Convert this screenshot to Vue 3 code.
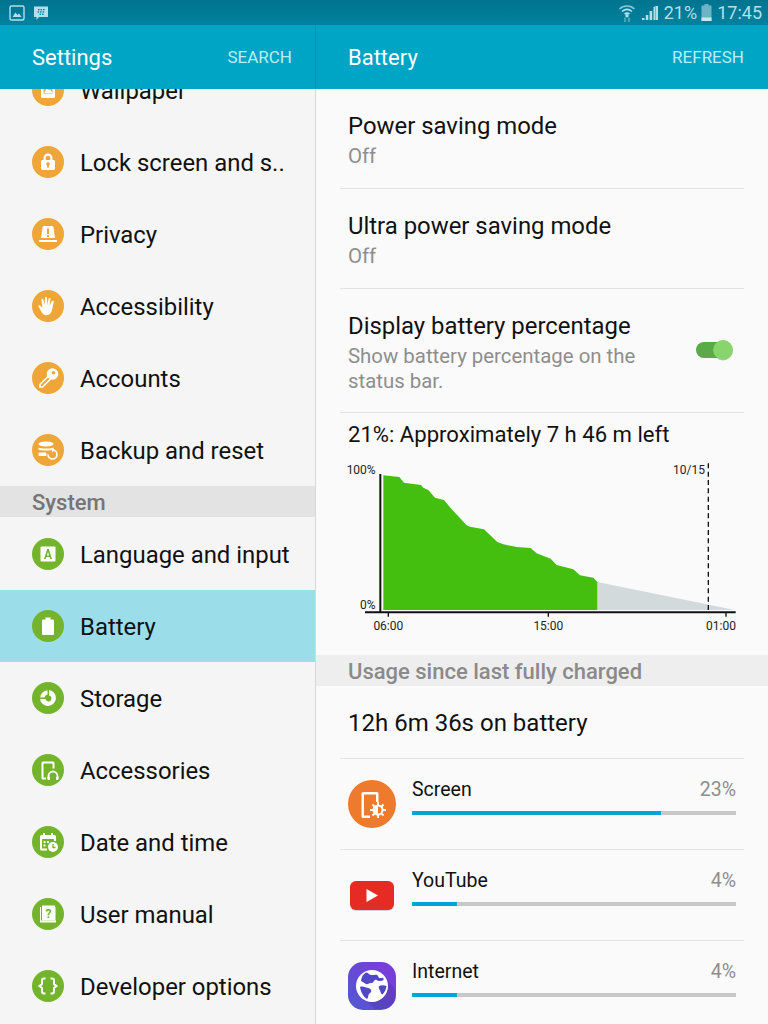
<script setup>
const orange = "#eea638";
const green = "#74b42c";

// Left pane, already scrolled so Wallpaper is half hidden
const personal = [
  { name: "Wallpaper", icon: "wallpaper" },
  { name: "Lock screen and s..", icon: "lock" },
  { name: "Privacy", icon: "privacy" },
  { name: "Accessibility", icon: "hand" },
  { name: "Accounts", icon: "key" },
  { name: "Backup and reset", icon: "backup" },
];
const system = [
  { name: "Language and input", icon: "lang" },
  { name: "Battery", icon: "battery", active: true },
  { name: "Storage", icon: "storage" },
  { name: "Accessories", icon: "accessories" },
  { name: "Date and time", icon: "date" },
  { name: "User manual", icon: "manual" },
  { name: "Developer options", icon: "dev" },
];

const settings = [
  { title: "Power saving mode", sub: "Off" },
  { title: "Ultra power saving mode", sub: "Off" },
];

const usage = [
  { name: "Screen", pct: "23%", fill: 77, icon: "screen" },
  { name: "YouTube", pct: "4%", fill: 14, icon: "youtube" },
  { name: "Internet", pct: "4%", fill: 14, icon: "internet" },
];

const curve =
  "130,76 178,81 192,98 243,105 250,113 265,120 285,143 312,150 330,172 380,226 390,230 432,238 472,276 490,283 530,291 572,294 590,310 632,326 650,345 700,358 720,376 760,383 772,396 772,480 130,480";
</script>

<template>
  <div class="screen">
    <!-- Status bar -->
    <div class="status">
      <div class="status-left">
        <svg width="16" height="16" viewBox="0 0 16 16">
          <rect x="1" y="1" width="14" height="14" rx="1.5" fill="none" stroke="#b4dfe9" stroke-width="1.4" />
          <path d="M3.5 12 6.5 7.5 8.500 10 10 8.500 12.500 12Z" fill="#b4dfe9" />
        </svg>
        <svg width="16" height="16" viewBox="0 0 16 16">
          <path d="M1 1.500H15V12H6L3.500 15V12H1Z" fill="#b4dfe9" />
          <g fill="#007f9e">
            <rect x="5" y="4" width="1.600" height="1.300" /><rect x="7.500" y="4" width="1.600" height="1.300" /><rect x="10" y="4" width="1.600" height="1.300" />
            <rect x="4.500" y="6.300" width="1.600" height="1.300" /><rect x="7" y="6.300" width="1.600" height="1.300" /><rect x="9.500" y="6.300" width="1.600" height="1.300" />
            <rect x="6.500" y="8.600" width="1.600" height="1.300" /><rect x="9" y="8.600" width="1.600" height="1.300" />
          </g>
        </svg>
      </div>
      <div class="status-right">
        <svg width="18" height="20" viewBox="0 0 18 20" fill="none" stroke="#b4dfe9" stroke-width="1.600">
          <path d="M1.500 6C5.500 2 12.500 2 16.500 6" opacity=".75" />
          <path d="M4 8.500C7 6 11 6 14 8.500" />
          <path d="M6.500 11C8 10 10 10 11.500 11" />
          <circle cx="9" cy="12.800" r=".9" fill="#b4dfe9" />
          <path d="M7 14.500V19M11 14.500V19" stroke-width="1.400" opacity=".55" />
        </svg>
        <svg class="signal" width="16" height="16" viewBox="0 0 16 16" fill="#b4dfe9">
          <path d="M0 13H2.500V15H0ZM3.800 10H6.300V15H3.800ZM7.600 6H10.200V15H7.600ZM11.500 2 13 1.500V15H11.500ZM13.400 1H16V15H13.400Z" />
        </svg>
        <span class="pct">21%</span>
        <svg width="11" height="17" viewBox="0 0 11 17">
          <path d="M3.500 0H7.500V1.500H10.500V17H.5V1.500H3.500Z" fill="#6cb5c7" />
          <rect x=".5" y="13.500" width="10" height="3.500" fill="#c6e8f0" />
        </svg>
        <span class="time">17:45</span>
      </div>
    </div>

    <div class="panes">
      <!-- Settings list -->
      <section class="left">
        <header class="bar">
          <span class="bar-title">Settings</span>
          <span class="bar-action">SEARCH</span>
        </header>
        <div class="scroller">
          <div class="list">
            <div v-for="item in personal" :key="item.name" class="row">
              <span class="dot" :style="{ background: orange }">
                <svg width="32" height="32" viewBox="0 0 32 32" fill="#fff">
                  <template v-if="item.icon === 'wallpaper'">
                    <rect x="9" y="8" width="14" height="16" rx="1" />
                    <rect x="11.500" y="10.500" width="9" height="9" :fill="orange" />
                    <path d="M12 19 15 14l2 2.500 1-1 2.500 3.500Z" />
                  </template>
                  <template v-if="item.icon === 'lock'">
                    <path d="M11.500 15V12a4.500 4.500 0 0 1 9 0v3h-2.200v-3a2.300 2.300 0 0 0-4.600 0v3Z" />
                    <rect x="9" y="14" width="14" height="10" rx="1.500" />
                    <circle cx="16" cy="18" r="1.800" :fill="orange" />
                    <rect x="15.100" y="18.500" width="1.800" height="3.200" :fill="orange" />
                  </template>
                  <template v-if="item.icon === 'privacy'">
                    <path d="M10.500 9.500a1.500 1.500 0 0 1 1.500-1.500h8a1.500 1.500 0 0 1 1.500 1.500L23 20H9Z" />
                    <rect x="7" y="22" width="18" height="2" />
                    <rect x="15" y="10.500" width="2" height="5.500" :fill="orange" />
                    <rect x="15" y="17" width="2" height="2" :fill="orange" />
                  </template>
                  <template v-if="item.icon === 'hand'">
                    <path d="M12.500 25c-2-1-3-3-4-5l-2-3.500c-.5-1 .8-1.800 1.600-1l2.400 2.600L9.500 10c-.2-1.300 1.600-1.600 1.900-.3l1.300 5.300.3-7c0-1.400 2-1.400 2 0l.3 7 1.300-6.200c.3-1.300 2.100-1 1.900.3l-1 6.700 2.400-4.500c.7-1.100 2.300-.3 1.800.9L20 20c-.8 3-2.500 6-7.500 5Z" />
                  </template>
                  <template v-if="item.icon === 'key'">
                    <path d="M8 22.500 16.500 14l2.500 2.500-8.500 8.500H8Z" fill="none" stroke="#fff" stroke-width="1.700" stroke-linejoin="round" />
                    <circle cx="20.500" cy="12" r="5.800" />
                    <circle cx="21.500" cy="10.800" r="1.800" :fill="orange" />
                  </template>
                  <template v-if="item.icon === 'backup'">
                    <ellipse cx="14" cy="10" rx="7.500" ry="2.500" />
                    <path d="M6.500 13.500c2 1.300 13 1.300 15 0v2c-2 1.300-13 1.300-15 0Z" />
                    <rect x="6.500" y="18.500" width="8" height="3.500" rx="1" />
                    <path d="M20.500 16a4.500 4.500 0 1 1-4.500 4.500" fill="none" stroke="#fff" stroke-width="1.600" />
                    <path d="M20 13.500v5l3-2.500Z" />
                  </template>
                </svg>
              </span>
              <span class="row-name">{{ item.name }}</span>
            </div>
            <div class="band">System</div>
            <div
              v-for="item in system"
              :key="item.name"
              class="row"
              :class="{ active: item.active }"
            >
              <span class="dot" :style="{ background: green }">
                <svg width="32" height="32" viewBox="0 0 32 32" fill="#fff">
                  <template v-if="item.icon === 'lang'">
                    <rect x="8.500" y="8.500" width="15" height="15" rx="1" />
                    <path d="M12 21 15.200 11h1.600L20 21h-1.800l-.6-2h-3.200l-.6 2ZM14.900 17.500h2.200L16 13.800Z" :fill="green" />
                  </template>
                  <template v-if="item.icon === 'battery'">
                    <path d="M13.500 7.500h5v2H21a1 1 0 0 1 1 1V24a1 1 0 0 1-1 1H11a1 1 0 0 1-1-1V10.500a1 1 0 0 1 1-1h2.500Z" />
                  </template>
                  <template v-if="item.icon === 'storage'">
                    <path d="M17 8a8 8 0 1 1-9 9h5.500a3 3 0 1 0 3.500-3.500Z" />
                    <path d="M8.200 15.500A8 8 0 0 1 15.500 8.200V12.500A4 4 0 0 0 12.500 15.500Z" />
                  </template>
                  <template v-if="item.icon === 'accessories'">
                    <path d="M11 7.500h10a1.500 1.500 0 0 1 1.500 1.500v5.500h-2V9.500H11.500v14H14v2h-3A1.500 1.500 0 0 1 9.500 24V9A1.500 1.500 0 0 1 11 7.500Z" />
                    <path d="M16.500 25v-3a4.500 4.500 0 0 1 9 0v3" fill="none" stroke="#fff" stroke-width="1.800" />
                    <rect x="15.500" y="22.500" width="2.500" height="3.500" rx=".8" />
                    <rect x="24" y="22.500" width="2.500" height="3.500" rx=".8" />
                  </template>
                  <template v-if="item.icon === 'date'">
                    <path d="M11 7h2v2h6V7h2v2h1.500A1.500 1.500 0 0 1 24 10.500V15h-2v-2H10v9.500h5v2H9.500A1.500 1.500 0 0 1 8 23V10.500A1.500 1.500 0 0 1 9.500 9H11Z" />
                    <path d="M11.500 15h2v2h-2ZM15 15h2v2h-2ZM11.500 18.500h2v2h-2Z" />
                    <circle cx="21" cy="21" r="5" />
                    <path d="M21 18v3.500h2.500" fill="none" :stroke="green" stroke-width="1.300" />
                  </template>
                  <template v-if="item.icon === 'manual'">
                    <rect x="10" y="7.500" width="13" height="15" />
                    <path d="M9 22.500V9H8v15.500h16V9h-.500v13.500Z" />
                    <text x="16.500" y="19.500" font-size="12" font-weight="700" text-anchor="middle" font-family="Roboto, sans-serif" :fill="green">?</text>
                  </template>
                  <template v-if="item.icon === 'dev'">
                    <path d="M13.500 8.500h-1.500a2 2 0 0 0-2 2V14l-2.500 2 2.500 2v3.500a2 2 0 0 0 2 2h1.500M18.500 8.500H20a2 2 0 0 1 2 2V14l2.500 2-2.500 2v3.500a2 2 0 0 1-2 2h-1.500" fill="none" stroke="#fff" stroke-width="2" />
                  </template>
                </svg>
              </span>
              <span class="row-name">{{ item.name }}</span>
            </div>
          </div>
        </div>
      </section>

      <!-- Battery detail -->
      <section class="right">
        <header class="bar">
          <span class="bar-title">Battery</span>
          <span class="bar-action">REFRESH</span>
        </header>
        <div class="detail">
          <div v-for="s in settings" :key="s.title" class="setting">
            <div class="setting-title">{{ s.title }}</div>
            <div class="setting-sub">{{ s.sub }}</div>
          </div>
          <div class="setting toggle-row">
            <div class="toggle-text">
              <div class="setting-title">Display battery percentage</div>
              <div class="setting-sub">Show battery percentage on the status bar.</div>
            </div>
            <svg class="toggle" width="40" height="26" viewBox="0 0 40 26">
              <rect x="1" y="5" width="30" height="16" rx="8" fill="#5aaa48" />
              <circle cx="28" cy="13.500" r="10" fill="#000" opacity=".2" />
              <circle cx="28" cy="13" r="10" fill="#88d56e" />
            </svg>
          </div>

          <div class="estimate">21%: Approximately 7 h 46 m left</div>
          <svg class="chart" width="410" height="190" viewBox="0 0 1230 570">
            <polygon points="772,396 1185,480 772,480" fill="#d2dadb" />
            <polygon :points="curve" fill="#45bf0f" />
            <path d="M121 72V487M75 487H1187" stroke="#111" stroke-width="6" fill="none" />
            <path d="M145 487V500M625 487V500M1158 487V500" stroke="#111" stroke-width="4" />
            <path d="M1105 40V485" stroke="#111" stroke-width="4" stroke-dasharray="15 10" />
            <g font-family="Roboto, sans-serif" font-size="36" fill="#222">
              <text x="107" y="72" text-anchor="end">100%</text>
              <text x="107" y="476" text-anchor="end">0%</text>
              <text x="1095" y="72" text-anchor="end">10/15</text>
              <text x="145" y="539" text-anchor="middle">06:00</text>
              <text x="625" y="539" text-anchor="middle">15:00</text>
              <text x="1143" y="539" text-anchor="middle">01:00</text>
            </g>
          </svg>

          <div class="band usage-band">Usage since last fully charged</div>
          <div class="on-battery">12h 6m 36s on battery</div>
          <div v-for="u in usage" :key="u.name" class="app">
            <svg class="app-icon" width="48" height="48" viewBox="0 0 48 48">
              <template v-if="u.icon === 'screen'">
                <circle cx="24" cy="24" r="24" fill="#ee7a2d" />
                <path d="M15 12h14a1.500 1.500 0 0 1 1.500 1.500V22h-2.500v-7.500H16v21h6V38h-7a1.500 1.500 0 0 1-1.500-1.500v-23A1.500 1.500 0 0 1 15 12Z" fill="#fff" />
                <circle cx="30" cy="30" r="5.500" fill="#fff" />
                <path d="M30 22v16M22 30h16M24.500 24.500l11 11M35.500 24.500l-11 11" stroke="#fff" stroke-width="2" />
                <path d="M30 26.500a3.500 3.500 0 0 1 0 7Z" fill="#ee7a2d" />
              </template>
              <template v-if="u.icon === 'youtube'">
                <rect x="2" y="11" width="44" height="29" rx="6" fill="#000" opacity=".15" />
                <rect x="2" y="10" width="44" height="29" rx="6" fill="#e62a24" />
                <path d="M18.500 18 30 24.500 18.500 31Z" fill="#fff" />
              </template>
              <template v-if="u.icon === 'internet'">
                <defs>
                  <linearGradient id="inet" x1="1" y1="0" x2="0" y2="1">
                    <stop offset="0" stop-color="#8038dc" />
                    <stop offset="1" stop-color="#4f5ad0" />
                  </linearGradient>
                </defs>
                <rect x="0" y="0" width="48" height="48" rx="15" fill="url(#inet)" />
                <path d="M13 34 27 47H33Q47 47 47 33V27L35 13Z" fill="#000" opacity=".1" />
                <circle cx="24" cy="24" r="16" fill="#fff" />
                <path d="M18 10.500c2 0 3 2 5 2.500s4-1 6 0 1 3 3 3 2-1 4 1c-1 2-3 2-5 2s-2-2-4-1-1 3-4 3-3 2-5 1-3-2-5-3c.5-4 2-7 5-8.500Z" fill="#5148c8" />
                <path d="M12 25c2-1 4 0 6 .5s4 .5 5 2.500-1 3-2 4-.5 4-2 5c-3-2-6-6-7-12Z" fill="#5148c8" />
                <path d="M31 24c2-1 5-1 7.500 0-.5 3-1.500 6-4 8.500-1.500-.5-2-2.500-2.500-4s-2-3-1-4.500Z" fill="#5148c8" />
              </template>
            </svg>
            <div class="app-body">
              <div class="app-line">
                <span class="app-name">{{ u.name }}</span>
                <span class="app-pct">{{ u.pct }}</span>
              </div>
              <div class="track">
                <div class="fill" :style="{ width: u.fill + '%' }"></div>
              </div>
            </div>
          </div>
        </div>
      </section>
    </div>
  </div>
</template>

<style>
html,
body {
  margin: 0;
  background: #fafafa;
}
</style>

<style scoped>
.screen {
  width: 768px;
  height: 1024px;
  overflow: hidden;
  display: flex;
  flex-direction: column;
  font-family: Roboto, "Liberation Sans", sans-serif;
  color: #111;
}

/* Status bar */
.status {
  height: 25px;
  flex: none;
  display: flex;
  justify-content: space-between;
  align-items: center;
  padding: 0 6px 0 9px;
  background: linear-gradient(#00748f, #00829f);
  color: #b4dfe9;
  font-size: 18px;
}
.status-left {
  display: flex;
  gap: 8px;
}
.status-right {
  display: flex;
  align-items: center;
  gap: 4px;
}
.signal {
  margin-left: 2px;
}
.pct {
  margin-left: 2px;
}
.time {
  margin-left: 1px;
}

.panes {
  flex: 1;
  min-height: 0;
  display: flex;
}
.left {
  width: 315px;
  flex: none;
  display: flex;
  flex-direction: column;
  background: #f5f5f5;
  border-right: 1px solid #d8d8d8;
}
.right {
  flex: 1;
  min-width: 0;
  display: flex;
  flex-direction: column;
  background: #fafafa;
}

/* Action bars */
.bar {
  height: 64px;
  flex: none;
  display: flex;
  justify-content: space-between;
  align-items: center;
  background: #00a5c5;
  color: #fff;
}
.left .bar {
  padding: 0 23px 0 32px;
  margin-right: -1px;
  border-right: 1px solid #0095b2;
}
.right .bar {
  padding: 0 24px 0 32px;
}
.bar-title {
  font-size: 22px;
}
.bar-action {
  font-size: 17px;
  color: #b5f0f5;
}

/* Left list */
.scroller {
  flex: 1;
  min-height: 0;
  overflow: hidden;
}
.list {
  margin-top: -35px;
}
.row {
  height: 72px;
  display: flex;
  align-items: center;
  gap: 16px;
  padding-left: 32px;
}
.row.active {
  background: #9bdde9;
}
.dot {
  width: 32px;
  height: 32px;
  border-radius: 50%;
  flex: none;
}
.dot svg {
  display: block;
}
.row-name {
  font-size: 23.900px;
  white-space: nowrap;
  padding-top: 1px;
}
.band {
  background: #e3e3e3;
  color: #757575;
  font-size: 22px;
  font-weight: 500;
  height: 31px;
  line-height: 34px;
  padding-left: 32px;
  margin-bottom: 1px;
}

/* Right detail */
.detail {
  flex: 1;
  min-height: 0;
  overflow: hidden;
}
.setting {
  height: 100px;
  margin: 0 24px;
  padding: 21px 8px 0;
  box-sizing: border-box;
  border-bottom: 1px solid #e3e3e3;
}
.setting-title {
  font-size: 23.900px;
  line-height: 32px;
}
.setting-sub {
  font-size: 20.400px;
  line-height: 25px;
  color: #8e8e8e;
  margin-top: 2px;
}
.toggle-row {
  height: 124px;
  display: flex;
  justify-content: space-between;
}
.toggle-text {
  width: 310px;
}
.toggle {
  margin: 27px 1px 0 0;
  flex: none;
}
.estimate {
  font-size: 22.100px;
  padding: 7px 0 0 32px;
  line-height: 28px;
}
.chart {
  display: block;
  margin: 2px 0 15px 24px;
}
.usage-band {
  background: #eeeeee;
  color: #8a8a8a;
  font-size: 22px;
  line-height: 33px;
  margin-bottom: 0;
}
.on-battery {
  font-size: 24px;
  height: 72px;
  line-height: 75px;
  margin: 0 24px;
  padding-left: 8px;
  border-bottom: 1px solid #e3e3e3;
}
.app {
  height: 90px;
  margin: 0 24px;
  padding: 0 8px;
  display: flex;
  align-items: center;
  gap: 16px;
  border-bottom: 1px solid #e3e3e3;
}
.app-icon {
  flex: none;
}
.app-body {
  flex: 1;
  margin-top: -17px;
}
.app-line {
  display: flex;
  justify-content: space-between;
  font-size: 19.500px;
  line-height: 28px;
}
.app-pct {
  color: #8e8e8e;
}
.track {
  height: 4px;
  margin-top: 7px;
  background: #c8c8c8;
}
.fill {
  height: 100%;
  background: #00a5d5;
}
</style>
